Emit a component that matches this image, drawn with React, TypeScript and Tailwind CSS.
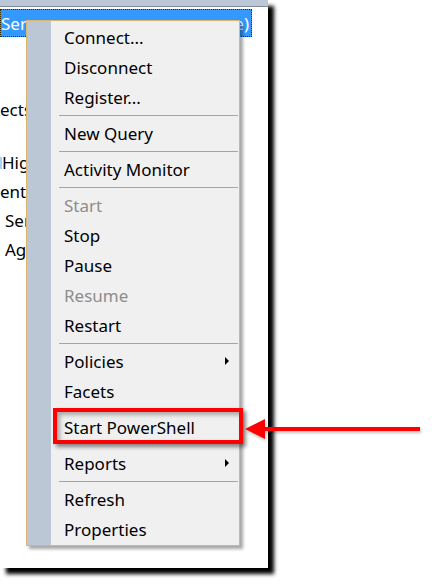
import React from "react";

type Item =
  | { kind: "item"; label: string; disabled?: boolean; sub?: boolean }
  | { kind: "sep"; hidden?: boolean };

const items: Item[] = [
  { kind: "item", label: "Connect..." },
  { kind: "item", label: "Disconnect" },
  { kind: "item", label: "Register..." },
  { kind: "sep" },
  { kind: "item", label: "New Query" },
  { kind: "sep" },
  { kind: "item", label: "Activity Monitor" },
  { kind: "sep" },
  { kind: "item", label: "Start", disabled: true },
  { kind: "item", label: "Stop" },
  { kind: "item", label: "Pause" },
  { kind: "item", label: "Resume", disabled: true },
  { kind: "item", label: "Restart" },
  { kind: "sep" },
  { kind: "item", label: "Policies", sub: true },
  { kind: "item", label: "Facets" },
  { kind: "sep", hidden: true },
  { kind: "item", label: "Start PowerShell" },
  { kind: "sep", hidden: true },
  { kind: "item", label: "Reports", sub: true },
  { kind: "sep" },
  { kind: "item", label: "Refresh" },
  { kind: "item", label: "Properties" },
];

const font = { fontFamily: '"Noto Sans", "Open Sans", sans-serif' };

export default function App() {
  return (
    <div
      className="relative w-[442px] h-[586px] bg-white overflow-hidden text-[17px] text-black"
      style={font}
    >
      {/* screenshot panel */}
      <div className="relative w-[268px] h-[568px] bg-white shadow-[6px_6px_4px_#000] flex flex-col">
        <div className="h-[7px] bg-[#bcc8d8] border-b border-[#7d8a9c] shrink-0" />
        <div className="h-[2px] shrink-0" />
        <div className="w-[252px] h-[28px] bg-[#3399ff] border border-dotted border-[#3a2a00] flex items-center justify-between text-white leading-none overflow-hidden whitespace-nowrap">
          <span className="w-[26px] overflow-hidden">Serv</span>
          <span className="mr-[2px]">e)</span>
        </div>
        <div className="h-[58px] shrink-0" />
        <div className="w-[26px] overflow-hidden h-[29px] flex items-center leading-none whitespace-nowrap">ects</div>
        <div className="h-[24px] shrink-0" />
        <div className="w-[26px] overflow-hidden h-[29px] flex items-center leading-none whitespace-nowrap">
          <span className="w-[2px] h-[12px] bg-[#a9d3f5] shrink-0" />
          Hig
        </div>
        <div className="w-[26px] overflow-hidden h-[29px] flex items-center leading-none whitespace-nowrap">ent</div>
        <div className="w-[26px] overflow-hidden h-[29px] flex items-center leading-none whitespace-nowrap pl-[5px]">Ser</div>
        <div className="w-[26px] overflow-hidden h-[29px] flex items-center leading-none whitespace-nowrap pl-[5px]">Ag</div>
      </div>

      {/* context menu */}
      <div className="absolute left-[26px] top-[20px] w-[214px] h-[526px] bg-[#f0f0f0] border border-[#dcb66e] shadow-[3px_3px_3px_rgba(0,0,0,0.35)] flex">
        <div className="w-[24px] bg-[#bcc7d6] shrink-0" />
        <div className="flex-1 flex flex-col pt-[1px]">
          {items.map((it, i) =>
            it.kind === "sep" ? (
              <div key={i} className="h-[6px] flex items-center pl-[8px] pr-[1px]">
                <div className={`w-full h-[1px] ${it.hidden ? "bg-transparent" : "bg-[#9ea5ae]"}`} />
              </div>
            ) : (
              <div
                key={i}
                className={`h-[30px] flex items-center justify-between pl-[13px] pr-[10px] leading-none whitespace-nowrap ${
                  it.disabled ? "text-[#8d8d8d]" : "text-black"
                }`}
              >
                <span>{it.label}</span>
                {it.sub && (
                  <svg width="4" height="8" viewBox="0 0 4 8">
                    <path d="M0 0 L4 4 L0 8 Z" fill="#000" />
                  </svg>
                )}
              </div>
            )
          )}
        </div>
      </div>

      {/* red highlight box */}
      <div className="absolute left-[53px] top-[408px] w-[190px] h-[36px] border-[4px] border-[#ff0000] shadow-[3px_3px_4px_rgba(0,0,0,0.45),inset_3px_3px_4px_rgba(0,0,0,0.3)]" />

      {/* red arrow */}
      <svg
        className="absolute left-[240px] top-[412px]"
        width="190"
        height="34"
        viewBox="0 0 190 34"
      >
        <defs>
          <filter id="sh" x="-10%" y="-50%" width="120%" height="200%">
            <feGaussianBlur in="SourceAlpha" stdDeviation="1.5" />
            <feOffset dx="1" dy="2" result="b" />
            <feFlood floodColor="#000" floodOpacity="0.25" />
            <feComposite in2="b" operator="in" />
            <feMerge>
              <feMergeNode />
              <feMergeNode in="SourceGraphic" />
            </feMerge>
          </filter>
        </defs>
        <g filter="url(#sh)">
          <rect x="22" y="15" width="158" height="4" fill="#ff0000" />
          <path d="M5 17 L25 7 L25 27 Z" fill="#ff0000" />
        </g>
      </svg>
    </div>
  );
}
